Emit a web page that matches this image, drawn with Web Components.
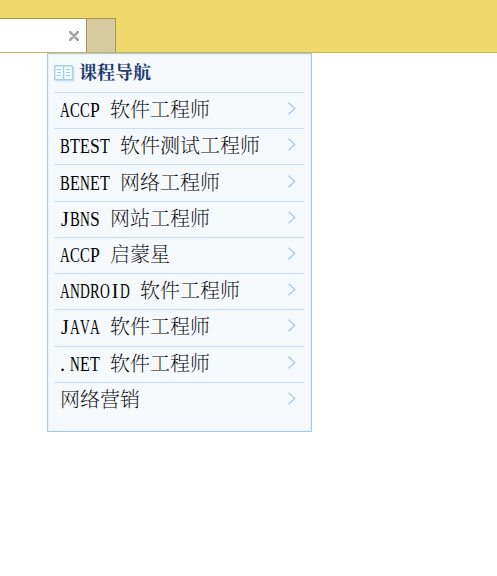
<!DOCTYPE html>
<html lang="zh-CN"><head><meta charset="utf-8"><title>课程导航</title>
<style>html,body{margin:0;background:#fff;overflow:hidden}body{height:576px}</style></head><body>
<tab-strip></tab-strip>
<course-panel heading="课程导航">
<course-item code="ACCP">软件工程师</course-item>
<course-item code="BTEST">软件测试工程师</course-item>
<course-item code="BENET">网络工程师</course-item>
<course-item code="JBNS">网站工程师</course-item>
<course-item code="ACCP">启蒙星</course-item>
<course-item code="ANDROID">软件工程师</course-item>
<course-item code="JAVA">软件工程师</course-item>
<course-item code=".NET">软件工程师</course-item>
<course-item>网络营销</course-item>
</course-panel>
<script>
customElements.define('tab-strip', class extends HTMLElement {
  constructor() {
    super();
    this.attachShadow({mode: 'open'}).innerHTML = `<style>
:host{display:flex;align-items:flex-end;box-sizing:border-box;height:53px;background:#f0d96a;border-bottom:1px solid #c9b452}
.tab,.new{box-sizing:border-box;height:34px;border-top:1px solid #a7954a;border-right:1px solid #a7954a}
.tab{width:87px;background:#fff;display:flex;justify-content:flex-end;align-items:center;padding-right:7px}
.new{width:29px;background:#d8cb9f}
svg{display:block;margin-top:1px}
</style><div class="tab"><svg width="10" height="10" viewBox="0 0 10 10"><path d="M1 1 9 9M9 1 1 9" stroke="#a4a4a4" stroke-width="2.5" stroke-linecap="round"/></svg></div><div class="new"></div>`;
  }
});
customElements.define('course-panel', class extends HTMLElement {
  constructor() {
    super();
    this.attachShadow({mode: 'open'}).innerHTML = `<style>
:host{display:block;box-sizing:border-box;width:265px;height:379px;margin-left:47px;padding:0 7px 0 6px;border:1px solid #a9c9e8;background:#f5f9fc;box-shadow:inset 0 0 0 1px #e6f1fa}
header{display:flex;height:38px;align-items:center;gap:4px}
svg{display:block;margin-top:0}
h2{margin:0 0 0 -1px;font:bold 18px/24px "Liberation Serif","Noto Serif CJK SC","Noto Sans CJK SC",serif;color:#203a70}
</style><header><svg width="22" height="18" viewBox="0 0 22 18"><path d="M2 17h18V3" fill="none" stroke="#d9e6ef" stroke-width="1.6"/><rect x=".7" y="1.7" width="17.8" height="14" rx=".5" fill="#f8fcff" stroke="#a1cfef" stroke-width="1.4"/><path d="M9.6 1v15" stroke="#a1cfef" stroke-width="1.4"/><path d="M2.5 5.5H7M3 8.5h4M2.5 11.5H7M12 5.5h4M12 8.5h4M12 11.5h4" stroke="#9bcaea"/></svg><h2></h2></header><slot></slot>`;
  }
  connectedCallback() { this.shadowRoot.querySelector('h2').textContent = this.getAttribute('heading'); }
});
customElements.define('course-item', class extends HTMLElement {
  constructor() {
    super();
    this.attachShadow({mode: 'open'}).innerHTML = `<style>
:host{display:flex;box-sizing:border-box;height:36.22px;border-top:1px solid #c9dff5;padding:0 8px 1px 6px;align-items:center;font:200 20px/28px "Liberation Serif","Noto Serif CJK SC","Noto Sans CJK SC",serif;color:#000;white-space:nowrap}
.code{display:block;flex:none}
.code span{display:inline-block;transform-origin:0 50%}
.name{flex:1}
svg{display:block;flex:none;margin-top:-3px}
</style><span class="code"></span><span class="name"><slot></slot></span><svg width="9" height="13" viewBox="0 0 9 13"><path d="M1.5 .8 7.8 6.5 1.5 12.2" fill="none" stroke="#a3c8ea" stroke-width="1.3"/></svg>`;
  }
  connectedCallback() {
    // Each code letter is condensed into a 10px half-width cell; one blank cell follows.
    const code = this.getAttribute('code') || '';
    const box = this.shadowRoot.querySelector('.code');
    if (code) box.style.width = (code.length + 1) * 10 + 'px';
    for (const ch of code) {
      const cell = document.createElement('span');
      cell.textContent = ch;
      box.append(cell);
      const w = cell.getBoundingClientRect().width;
      cell.style.width = '10px';
      // Narrow letters keep their own width and sit in the middle of the cell.
      if (w < 10) cell.style.textAlign = ch === '.' ? 'left' : 'center';
      else cell.style.transform = `scaleX(${9.8 / w})`;
    }
  }
});
</script></body></html>
